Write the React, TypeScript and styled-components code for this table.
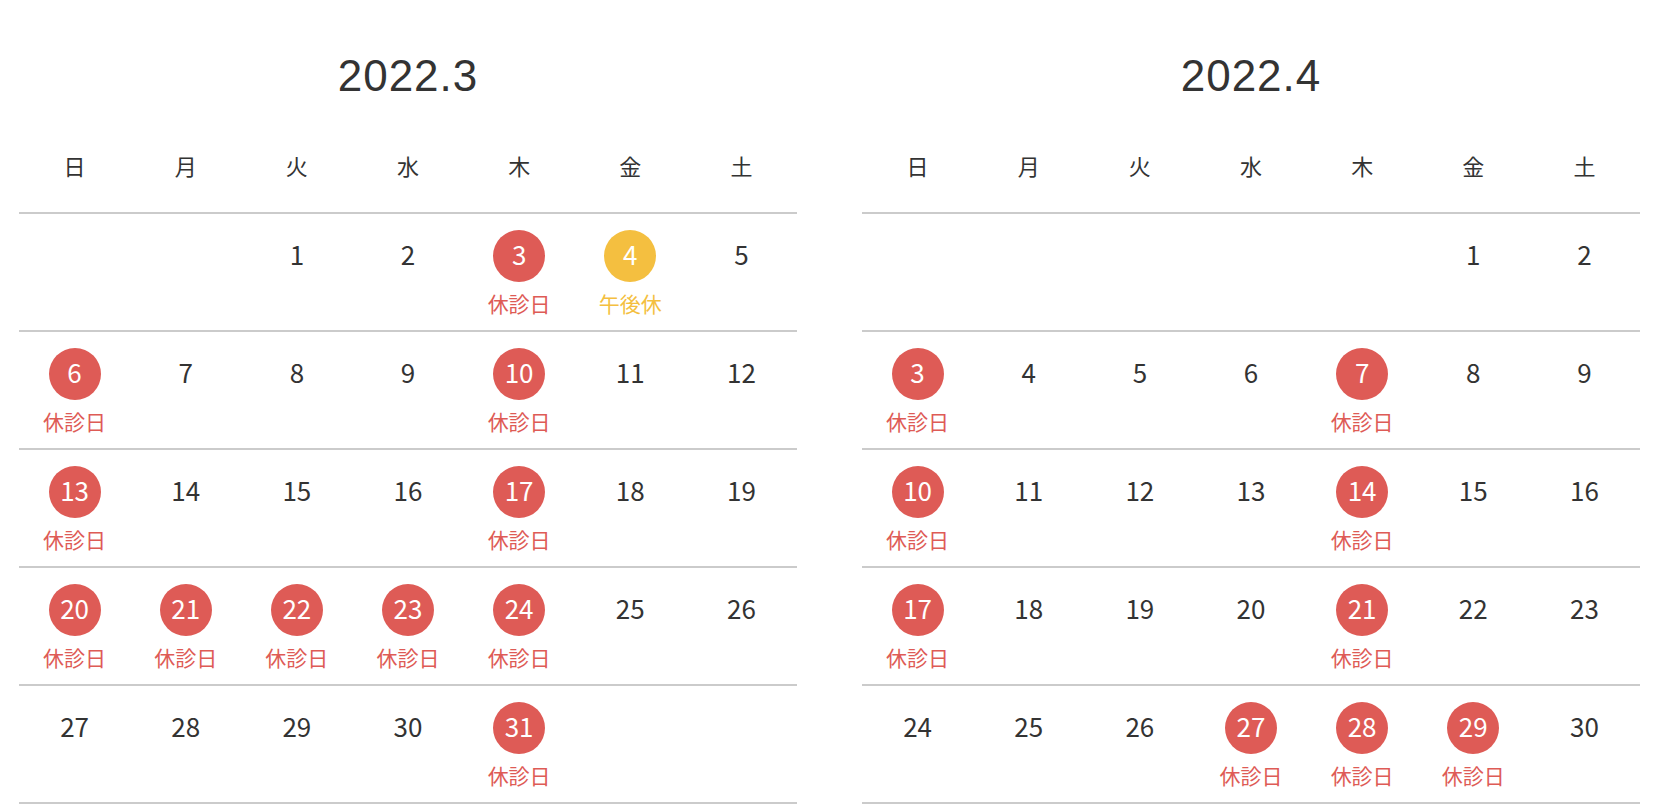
import React from "react";
import styled, { createGlobalStyle } from "styled-components";

const GlobalStyle = createGlobalStyle`
  html, body { margin: 0; padding: 0; background: #ffffff; }
  body { font-family: "Noto Sans CJK JP", "Noto Sans", sans-serif; color: #333333; }
`;

type Mark = "closed" | "pm";

interface MonthData {
  title: string;
  startDay: number;
  days: number;
  marks: Record<number, Mark>;
}

const months: MonthData[] = [
  {
    title: "2022.3",
    startDay: 2,
    days: 31,
    marks: {
      3: "closed", 4: "pm", 6: "closed", 10: "closed", 13: "closed", 17: "closed",
      20: "closed", 21: "closed", 22: "closed", 23: "closed", 24: "closed", 31: "closed",
    },
  },
  {
    title: "2022.4",
    startDay: 5,
    days: 30,
    marks: {
      3: "closed", 7: "closed", 10: "closed", 14: "closed", 17: "closed", 21: "closed",
      27: "closed", 28: "closed", 29: "closed",
    },
  },
];

const weekdays = ["日", "月", "火", "水", "木", "金", "土"];

const RED = "#de5b56";
const YELLOW = "#f4bf40";

const Page = styled.div`
  display: flex;
  gap: 65px;
  padding: 46px 0 0 19px;
  width: 1666px;
  box-sizing: border-box;
`;

const Calendar = styled.section`
  width: 778px;
  flex: 0 0 778px;
`;

const Title = styled.h2`
  margin: 0 0 18px;
  height: 60px;
  line-height: 60px;
  text-align: center;
  font-family: "Liberation Sans", Arial, sans-serif;
  font-weight: 400;
  font-size: 44px;
  letter-spacing: 1px;
  color: #333333;
`;

const Grid = styled.div`
  display: grid;
  grid-template-columns: repeat(7, 1fr);
`;

const Weekday = styled.div`
  height: 88px;
  line-height: 82px;
  text-align: center;
  font-size: 22px;
  color: #333333;
`;

const Week = styled.div<{ $last: boolean }>`
  display: grid;
  grid-template-columns: repeat(7, 1fr);
  border-top: 2px solid #cbcbcb;
  border-bottom: ${(p) => (p.$last ? "2px solid #cbcbcb" : "none")};
  height: 116px;
`;

const Cell = styled.div`
  display: flex;
  flex-direction: column;
  align-items: center;
  padding-top: 16px;
`;

const Num = styled.div<{ $mark?: Mark }>`
  box-sizing: border-box;
  width: 52px;
  height: 52px;
  padding-bottom: 4px;
  border-radius: 50%;
  display: flex;
  align-items: center;
  justify-content: center;
  font-size: 26px;
  line-height: 1;
  color: ${(p) => (p.$mark ? "#ffffff" : "#333333")};
  background: ${(p) => (p.$mark === "closed" ? RED : p.$mark === "pm" ? YELLOW : "transparent")};
`;

const Label = styled.div<{ $mark: Mark }>`
  margin-top: 9px;
  height: 24px;
  line-height: 24px;
  font-size: 21px;
  color: ${(p) => (p.$mark === "closed" ? RED : YELLOW)};
`;

function MonthCalendar({ data }: { data: MonthData }) {
  const cells: (number | null)[] = [];
  for (let i = 0; i < data.startDay; i++) cells.push(null);
  for (let d = 1; d <= data.days; d++) cells.push(d);
  while (cells.length % 7 !== 0) cells.push(null);
  const weeks: (number | null)[][] = [];
  for (let i = 0; i < cells.length; i += 7) weeks.push(cells.slice(i, i + 7));

  return (
    <Calendar>
      <Title>{data.title}</Title>
      <Grid>
        {weekdays.map((w) => (
          <Weekday key={w}>{w}</Weekday>
        ))}
      </Grid>
      {weeks.map((week, wi) => (
        <Week key={wi} $last={wi === weeks.length - 1}>
          {week.map((d, di) => {
            const mark = d ? data.marks[d] : undefined;
            return (
              <Cell key={di}>
                {d && <Num $mark={mark}>{d}</Num>}
                {mark && <Label $mark={mark}>{mark === "closed" ? "休診日" : "午後休"}</Label>}
              </Cell>
            );
          })}
        </Week>
      ))}
    </Calendar>
  );
}

export default function App() {
  return (
    <>
      <GlobalStyle />
      <Page>
        {months.map((m) => (
          <MonthCalendar key={m.title} data={m} />
        ))}
      </Page>
    </>
  );
}
